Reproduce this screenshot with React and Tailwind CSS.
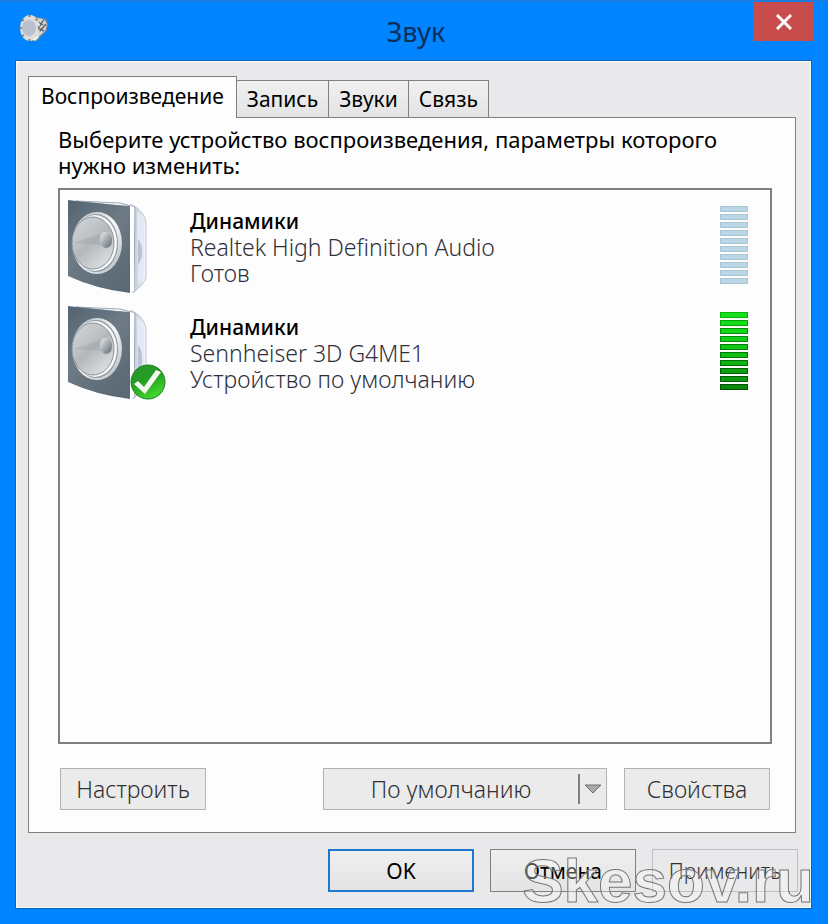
import React, { useState } from "react";

const tabs = [
  { id: "playback", label: "Воспроизведение" },
  { id: "recording", label: "Запись" },
  { id: "sounds", label: "Звуки" },
  { id: "comm", label: "Связь" },
];

const devices = [
  {
    id: 1,
    name: "Динамики",
    driver: "Realtek High Definition Audio",
    status: "Готов",
    isDefault: false,
  },
  {
    id: 2,
    name: "Динамики",
    driver: "Sennheiser 3D G4ME1",
    status: "Устройство по умолчанию",
    isDefault: true,
  },
];

const meterBars = [
  "border-[#08b50d] bg-[#16e01c]",
  "border-[#07a30b] bg-[#13dc19]",
  "border-[#078f0b] bg-[#12d818]",
  "border-[#078a0b] bg-[#11d017]",
  "border-[#067f0a] bg-[#10c816]",
  "border-[#067609] bg-[#0fbe14]",
  "border-[#056c08] bg-[#0eb313]",
  "border-[#056107] bg-[#0ca011]",
  "border-[#045a06] bg-[#0b980f]",
  "border-[#045005] bg-[#098a0d]",
];

function TitleIcon() {
  return (
    <svg className="h-8 w-8" viewBox="0 0 32 32" aria-hidden="true">
      <path d="M6 8 L12 5 L22 8 L28 9 L30 15 L28 22 L23 26 L19 31 L10 30 Z" fill="#7f888e" />
      <path d="M18 8 L26 9 L29 14 L27 21 L20 27 Z" fill="#d4d8da" />
      <path d="M19 11 L25 15 M26 9 L22 16 M28 14 L21 22 M22 19 L26 21" stroke="#5f6669" strokeWidth="1.5" />
      <ellipse cx="12" cy="18" rx="10" ry="13" fill="#dcdedd" />
      <ellipse
        cx="12"
        cy="18"
        rx="9"
        ry="12"
        fill="none"
        stroke="#8a8173"
        strokeWidth="2"
        strokeDasharray="2 6"
      />
      <ellipse cx="11" cy="18" rx="7" ry="8" fill="#b9c0d0" />
      <path d="M14 29 L19 25 L21 27 L17 31 Z" fill="#eceeee" />
    </svg>
  );
}

function Speaker() {
  return (
    <svg className="h-[94px] w-[84px]" viewBox="0 0 84 94" aria-hidden="true">
      <defs>
        <linearGradient id="front" x1="0" y1="0" x2="0.6" y2="1">
          <stop offset="0" stopColor="#526371" />
          <stop offset="0.5" stopColor="#6e7b86" />
          <stop offset="1" stopColor="#5c6a75" />
        </linearGradient>
        <linearGradient id="side" x1="0" y1="0" x2="1" y2="0">
          <stop offset="0" stopColor="#ffffff" />
          <stop offset="0.3" stopColor="#c9d1df" />
          <stop offset="1" stopColor="#f3f6fb" />
        </linearGradient>
        <linearGradient id="ring" x1="0" y1="0" x2="1" y2="1">
          <stop offset="0" stopColor="#a8b1b7" />
          <stop offset="0.5" stopColor="#f7f8f8" />
          <stop offset="1" stopColor="#aeb8bf" />
        </linearGradient>
        <linearGradient id="cone" x1="0" y1="0" x2="0.7" y2="1">
          <stop offset="0" stopColor="#d4d7d9" />
          <stop offset="0.45" stopColor="#bdc1c4" />
          <stop offset="0.55" stopColor="#b2b7ba" />
          <stop offset="1" stopColor="#dcdfe0" />
        </linearGradient>
        <linearGradient id="dome" x1="0" y1="0" x2="1" y2="1">
          <stop offset="0" stopColor="#eef0f1" />
          <stop offset="1" stopColor="#5c6770" />
        </linearGradient>
      </defs>
      {/* cabinet side */}
      <path d="M63 4 L69 8 Q77 14 78 23 L78 78 Q76 84 65 93 Z" fill="url(#side)" stroke="#bcc5d1" />
      <path d="M69 11 Q75 17 76 25 L76 77 L70 83 Z" fill="#e4eaf4" />
      <path d="M70 39 Q75 44 74 57 L70 66 Z" fill="#b9c4d2" />
      <path d="M8 1 L52 3 L67 7 L66 91 L60 91 L61 7 Z" fill="#f2f5f8" stroke="#9ba8b7" />
      {/* front panel */}
      <path d="M0 0 Q34 4 62 6 L62 93 Q28 89 0 76 Z" fill="url(#front)" />
      <path d="M62 6 L66 7 L66 91 L62 93 Z" fill="#ffffff" />
      {/* driver */}
      <ellipse cx="29" cy="43" rx="25" ry="31" fill="url(#ring)" />
      <ellipse cx="28" cy="43" rx="22" ry="29" fill="#8a959d" />
      <ellipse cx="27" cy="43" rx="22" ry="28" fill="#f6f7f7" />
      <ellipse cx="25" cy="43" rx="21" ry="26" fill="url(#cone)" stroke="#89939a" />
      <path d="M5 43 L33 34 L33 45 Z" fill="#92979c" opacity="0.3" />
      <path d="M36 32 Q44 31 44 40 Q44 48 37 48 Q32 46 32 40 Q32 33 36 32 Z" fill="url(#dome)" />
    </svg>
  );
}

function DefaultBadge() {
  return (
    <svg
      className="absolute right-0 bottom-0 h-9 w-9"
      viewBox="0 0 36 36"
      role="img"
      aria-label="Устройство по умолчанию"
    >
      <defs>
        <linearGradient id="badge" x1="0" y1="0" x2="0.5" y2="1">
          <stop offset="0" stopColor="#2f9431" />
          <stop offset="0.5" stopColor="#229e22" />
          <stop offset="1" stopColor="#3fd52b" />
        </linearGradient>
      </defs>
      <circle cx="18" cy="18" r="17" fill="url(#badge)" stroke="#1d7f20" />
      <path d="M4 20 L8 17 L14 23 L26 6 L31 8 L15 30 Z" fill="#f6f7f1" />
    </svg>
  );
}

function LevelMeter({ active }) {
  return (
    <div
      role="meter"
      aria-label="Уровень"
      aria-valuenow={active ? 100 : 0}
      className="flex w-7 flex-col gap-0.5"
    >
      {meterBars.map((bar) => (
        <span
          key={bar}
          className={`h-1.5 border ${active ? bar : "border-[#a5c6d3] bg-[#bdd6e6]"}`}
        />
      ))}
    </div>
  );
}

function App() {
  const [activeTab, setActiveTab] = useState("playback");

  return (
    <div className="flex min-h-screen flex-col border-t-2 border-[#1a7be0] bg-[#0084ff] font-['Noto_Sans','Open_Sans',sans-serif] text-[21px] leading-[26px] text-black">
      {/* Title bar */}
      <header className="grid h-[59px] grid-cols-3 items-start pr-3.5 pl-[18px]">
        <div className="pt-2">
          <TitleIcon />
        </div>
        <h1 className="pt-3 text-center text-[27px] leading-9 text-[#0d2f5c]">Звук</h1>
        <button
          type="button"
          aria-label="Закрыть"
          className="flex h-[39px] w-[61px] items-center justify-center justify-self-end bg-[#c84c4c]"
        >
          <svg className="h-4 w-4" viewBox="0 0 16 16" aria-hidden="true">
            <path d="M1 1 L15 15 M15 1 L1 15" stroke="#fff" strokeWidth="3" />
          </svg>
        </button>
      </header>

      <main className="mr-[17px] mb-4 ml-4 flex flex-1 flex-col border border-[#f8fafc] bg-[#e9e9eb] pt-3.5 pr-3.5 pb-[15px] pl-[11px] outline outline-[#0b64bd]">
        {/* Tabs */}
        <div role="tablist" className="flex items-end">
          {tabs.map((tab) => (
            <button
              key={tab.id}
              type="button"
              role="tab"
              aria-selected={activeTab === tab.id}
              onClick={() => setActiveTab(tab.id)}
              className={
                activeTab === tab.id
                  ? "z-10 -mb-px h-[42px] border border-b-0 border-[#808080] bg-[#fdfdfe] px-3 pb-1"
                  : "h-[37px] border border-b-0 border-l-0 border-[#808080] bg-linear-to-b from-[#f0f0f1] to-[#e4e4e6] px-2.5"
              }
            >
              {tab.label}
            </button>
          ))}
        </div>

        {/* Device panel */}
        <section
          role="tabpanel"
          className="flex flex-1 flex-col border border-[#808080] bg-[#fdfdfe] pt-2 pr-[23px] pb-[22px] pl-[29px]"
        >
          <p className="text-[22px]">
            Выберите устройство воспроизведения, параметры которого нужно изменить:
          </p>

          <ul className="mt-2.5 flex-1 border-2 border-[#7f7f7f] py-2.5 pr-[22px] pl-2">
            {devices.map((device) => (
              <li key={device.id} className="flex h-[106px] items-start">
                <div className="relative w-[98px] shrink-0">
                  <Speaker />
                  {device.isDefault && <DefaultBadge />}
                </div>
                <div className="flex-1 pt-2 pl-6 text-[23px] font-light text-[#30303a]">
                  <p className="text-[21px] font-medium text-black">{device.name}</p>
                  <p>{device.driver}</p>
                  <p>{device.status}</p>
                </div>
                <div className="pt-1.5">
                  <LevelMeter active={device.isDefault} />
                </div>
              </li>
            ))}
          </ul>

          <div className="mt-6 flex gap-[17px] px-0.5 text-[23px] font-light text-[#303030]">
            <button
              type="button"
              className="mr-auto h-[42px] w-[146px] border border-[#b0b3b1] bg-[#ebebec]"
            >
              Настроить
            </button>
            <div className="flex h-[42px] w-[284px] items-center border border-[#b0b3b1] bg-[#ebebec]">
              <button type="button" className="h-full flex-1">
                По умолчанию
              </button>
              <button
                type="button"
                aria-label="Выбрать тип по умолчанию"
                className="flex h-[30px] w-7 items-center justify-center border-l-2 border-[#808080]"
              >
                <svg className="h-2.5 w-[18px]" viewBox="0 0 18 10" aria-hidden="true">
                  <path d="M1 1 H17 L9 9 Z" fill="#a9a9a9" stroke="#707070" />
                </svg>
              </button>
            </div>
            <button type="button" className="h-[42px] w-[146px] border border-[#b0b3b1] bg-[#ebebec]">
              Свойства
            </button>
          </div>
        </section>

        {/* Footer */}
        <footer className="relative -mr-0.5 mt-4 flex justify-end gap-4">
          <button
            type="button"
            className="h-[43px] w-[146px] border-2 border-[#1f78d0] bg-linear-to-b from-[#efeff0] to-[#e4e4e5]"
          >
            OK
          </button>
          <button
            type="button"
            className="h-[43px] w-[146px] border border-[#808080] bg-linear-to-b from-[#efeff0] to-[#e4e4e5]"
          >
            Отмена
          </button>
          <button
            type="button"
            className="h-[43px] w-[146px] border border-[#bfbfc1] bg-[#e9e9eb] font-light text-[#303030]"
          >
            Применить
          </button>
          <span className="pointer-events-none absolute -right-4 -bottom-6 font-['Liberation_Sans',sans-serif] text-[62px] leading-[70px] font-bold text-white/30 [-webkit-text-stroke:1px_#777]">
            Skesov.ru
          </span>
        </footer>
      </main>
    </div>
  );
}

export default App;
